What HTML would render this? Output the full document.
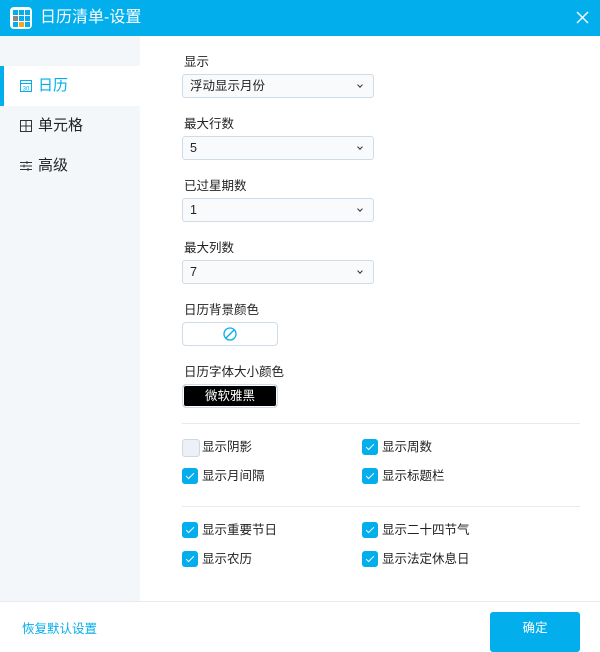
<!DOCTYPE html><html><head><meta charset="utf-8"><style>
*{margin:0;padding:0;box-sizing:border-box}
body{width:600px;height:650px;overflow:hidden;background:#fff;font-family:"Liberation Sans","Noto Sans CJK SC",sans-serif;font-size:13px;color:#222;position:relative}
.title{position:absolute;left:0;top:0;width:600px;height:36px;background:#03aeec;color:#fff;font-size:16px}
.logo{position:absolute;left:10px;top:7px;width:22px;height:22px;background:#fff;border-radius:4px}
.logo b{position:absolute;width:5px;height:5px;display:block}
.side{position:absolute;left:0;top:36px;width:140px;height:565px;background:#f4f7fa}
.item{position:absolute;left:0;width:140px;height:40px;font-size:15px;line-height:40px;padding-left:38px}
.lbl{position:absolute;left:184px;font-size:12.5px}
.sel{position:absolute;left:182px;width:192px;height:24px;border:1px solid #cfdbe6;border-radius:3px;background:#f8fafc;font-size:12.5px;line-height:22px;padding-left:7px}
.sel:after{content:"";position:absolute;right:11px;top:8px;width:3px;height:3px;border-right:1.3px solid #333;border-bottom:1.3px solid #333;transform:rotate(45deg)}
.cb{position:absolute;font-size:12.5px;line-height:17px;padding-left:20px}
.cb:before{content:"";position:absolute;left:0;top:0;width:16px;height:16px;border-radius:3px;background:#03aeec}
.cb:after{content:"";position:absolute;left:6px;top:3px;width:3px;height:7px;border-right:1.4px solid #fff;border-bottom:1.4px solid #fff;transform:rotate(45deg)}
.cb.off:before{background:#eef0f7;border:1px solid #cfd6e4}
.cb.off:after{display:none}
.hr{position:absolute;left:182px;width:398px;height:1px;background:#e6e9f0}
</style></head><body>
<div class="title"><div class="logo">
<b style="left:3px;top:3px;background:#03aeec"></b><b style="left:9px;top:3px;background:#03aeec"></b><b style="left:15px;top:3px;background:#03aeec"></b>
<b style="left:3px;top:9px;background:#888"></b><b style="left:9px;top:9px;background:#03aeec"></b><b style="left:15px;top:9px;background:#03aeec"></b>
<b style="left:3px;top:15px;background:#03aeec"></b><b style="left:9px;top:15px;background:#f5a623"></b><b style="left:15px;top:15px;background:#03aeec"></b></div>
<span style="position:absolute;left:40px;top:7px;line-height:22px">日历清单-设置</span>
<svg style="position:absolute;left:576px;top:11px" width="13" height="13"><path d="M1 1L12 12M12 1L1 12" stroke="#fff" stroke-width="1.4"/></svg></div>
<div class="side">
<div class="item" style="top:30px;background:#fff;color:#03aeec;border-left:4px solid #03aeec;padding-left:34px">
<svg style="position:absolute;left:16px;top:14px" width="12" height="12"><rect x="0.5" y="0.5" width="11" height="11" fill="none" stroke="#03aeec"/><path d="M0 3.5H12" stroke="#03aeec"/><text x="6" y="10.5" font-size="6" text-anchor="middle" fill="#03aeec">30</text></svg>日历</div>
<div class="item" style="top:70px"><svg style="position:absolute;left:20px;top:14px" width="12" height="12"><rect x="0.5" y="0.5" width="11" height="11" fill="none" stroke="#333"/><path d="M6 0V12M0 6H12" stroke="#333"/></svg>单元格</div>
<div class="item" style="top:110px"><svg style="position:absolute;left:20px;top:15px" width="12" height="10"><path d="M0 1.5H12M0 5H12M0 8.5H12" stroke="#333"/><path d="M7 0V3M4 3.5V6.5M8 7V10" stroke="#333"/></svg>高级</div>
</div>
<div class="lbl" style="top:51px">显示</div><div class="sel" style="top:74px">浮动显示月份</div>
<div class="lbl" style="top:113px">最大行数</div><div class="sel" style="top:136px">5</div>
<div class="lbl" style="top:175px">已过星期数</div><div class="sel" style="top:198px">1</div>
<div class="lbl" style="top:237px">最大列数</div><div class="sel" style="top:260px">7</div>
<div class="lbl" style="top:299px">日历背景颜色</div>
<div style="position:absolute;left:182px;top:322px;width:96px;height:24px;border:1px solid #cfdbe6;border-radius:4px"><svg style="position:absolute;left:40px;top:4px" width="14" height="14"><circle cx="7" cy="7" r="6" fill="none" stroke="#03aeec" stroke-width="1.3"/><path d="M3 11L11 3" stroke="#03aeec" stroke-width="1.3"/></svg></div>
<div class="lbl" style="top:361px">日历字体大小颜色</div>
<div style="position:absolute;left:182px;top:384px;width:96px;height:24px;border:1px solid #cfdbe6;border-radius:4px;background:#000;color:#fff;text-align:center;line-height:22px;font-size:12.5px;box-shadow:inset 0 0 0 1px #fff">微软雅黑</div>
<div class="hr" style="top:423px"></div>
<div class="cb off" style="left:182px;top:439px">显示阴影</div><div class="cb" style="left:362px;top:439px">显示周数</div>
<div class="cb" style="left:182px;top:468px">显示月间隔</div><div class="cb" style="left:362px;top:468px">显示标题栏</div>
<div class="hr" style="top:506px"></div>
<div class="cb" style="left:182px;top:522px">显示重要节日</div><div class="cb" style="left:362px;top:522px">显示二十四节气</div>
<div class="cb" style="left:182px;top:551px">显示农历</div><div class="cb" style="left:362px;top:551px">显示法定休息日</div>
<div style="position:absolute;left:0;top:601px;width:600px;height:1px;background:#e8eaf2"></div>
<div style="position:absolute;left:22px;top:618px;color:#03aeec;font-size:12.5px">恢复默认设置</div>
<div style="position:absolute;left:490px;top:612px;width:90px;height:40px;background:#03aeec;border-radius:3px;color:#fff;text-align:center;padding-top:5px;font-size:12.5px">确定</div>
</body></html>
